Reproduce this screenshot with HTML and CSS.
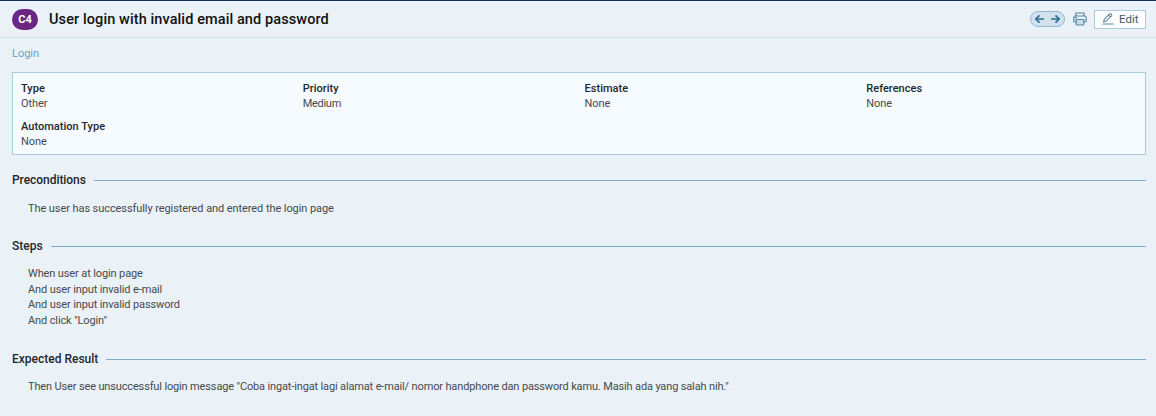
FILE: index.html
```
<!DOCTYPE html>
<html lang="en">
<head>
<meta charset="utf-8">
<title>User login with invalid email and password</title>
<link rel="stylesheet" href="styles.css">
</head>
<body>
<header class="header">
  <span class="badge">C4</span>
  <h1 class="title">User login with invalid email and password</h1>
  <div class="toolbar">
    <div class="pager">
      <svg width="33" height="14" viewBox="0 0 33 14" fill="none" stroke="#356d91" stroke-width="1.7"><path d="M13 7H5.5M8.500 3.300 4.800 7 8.500 10.700M20 7h7.500M24.500 3.300 28.200 7 24.500 10.700"/></svg>
    </div>
    <svg class="printer" width="14" height="14" viewBox="0 0 14 14" fill="none" stroke="#5b88a5" stroke-width="1.2"><path d="M3 4V1h8v3M3 10H1.800Q.8 10 .8 9V5.500Q.8 4 2.300 4h9.400q1.500 0 1.500 1.500V9q0 1-1 1H11"/><path d="M3.200 7.500h7.600v4.200q0 1.300-1.300 1.300h-5q-1.300 0-1.300-1.300z" fill="#c9dce9"/><path d="M2 5.700h2" stroke="#3a9c86"/></svg>
    <a class="edit"><svg width="12" height="12" viewBox="0 0 12 12" fill="none" stroke="#5b88a5" stroke-width="1.1"><path d="m1.700 8.700.6-2.500 5.300-5.300q.6-.5 1.200 0l.7.7q.5.600 0 1.200L4.200 8.100zM6.500 2l1.900 1.900M.3 11h11.400"/></svg><span class="edit-label">Edit</span></a>
  </div>
</header>
<main class="content">
  <a class="crumb">Login</a>
  <dl class="fields">
    <div><dt>Type</dt><dd>Other</dd></div>
    <div><dt>Priority</dt><dd class="medium">Medium</dd></div>
    <div><dt>Estimate</dt><dd>None</dd></div>
    <div><dt>References</dt><dd>None</dd></div>
    <div><dt>Automation Type</dt><dd>None</dd></div>
  </dl>
  <section class="section preconditions">
    <h2>Preconditions</h2>
    <p>The user has successfully registered and entered the login page</p>
  </section>
  <section class="section steps">
    <h2>Steps</h2>
    <p>When user at login page<br>And user input invalid e-mail<br>And user input invalid password<br>And click "Login"</p>
  </section>
  <section class="section expected">
    <h2>Expected Result</h2>
    <p>Then User see unsuccessful login message "Coba ingat-ingat lagi alamat e-mail/ nomor handphone dan password kamu. Masih ada yang salah nih."</p>
  </section>
</main>
</body>
</html>
```
FILE: styles.css
```
* { box-sizing: border-box; }
body {
  margin: 0;
  height: 416px;
  background: #eaf1f7;
  border-top: 1px solid #0b3558;
  font: 11px/15.6px Roboto, "Liberation Sans", sans-serif;
  color: #474a4d;
}
.header {
  display: flex;
  align-items: center;
  height: 37px;
  padding: 0 10px 0 12px;
  border-bottom: 1px solid #cfe1ec;
}
.badge {
  width: 26px;
  height: 21px;
  border-radius: 10.5px;
  background: #6a2680;
  color: #fff;
  font-size: 11px;
  font-weight: 700;
  line-height: 22px;
  text-align: center;
}
.title {
  margin: 0 0 0 11px;
  padding-top: 2px;
  font-size: 14.5px;
  font-weight: 500;
  line-height: 20px;
  letter-spacing: 0.1px;
  color: #111;
  white-space: nowrap;
}
.toolbar { display: flex; align-items: center; margin-left: auto; }
.pager {
  display: flex;
  width: 35px;
  height: 16px;
  margin-top: -1px;
  border: 1px solid #91b9d3;
  border-radius: 8px;
  background: #d1e1ed;
}
.printer { margin: -1px 0 0 8px; }
.edit {
  display: flex;
  align-items: center;
  gap: 5px;
  width: 52px;
  height: 19px;
  margin-left: 7px;
  padding-left: 7px;
  border: 1px solid #a9cbdf;
  background: #fff;
  color: #40576a;
  font-size: 11.5px;
}
.edit-label { padding-top: 1px; }
.content { padding: 0 10px 0 12px; }
.crumb {
  display: block;
  padding-top: 8px;
  line-height: 15px;
  color: #6f9fc4;
}
.fields {
  display: grid;
  grid-template-columns: repeat(4, 281.75px);
  grid-auto-rows: 38px;
  height: 83px;
  margin: 11px 0 0;
  padding: 8px 0 0 8px;
  border: 1px solid #a9cbdf;
  background: #f6fbff;
}
.fields dt { line-height: 15px; font-weight: 500; letter-spacing: 0.03px; color: #24282c; }
.fields dd { margin: 0; line-height: 15px; letter-spacing: -0.1px; }
.fields .medium { letter-spacing: -0.3px; }
.section { margin-top: 16px; }
.section h2 {
  display: flex;
  align-items: center;
  gap: 8px;
  height: 18px;
  margin: 0;
  font-size: 12px;
  font-weight: 500;
  line-height: 18px;
  color: #24282c;
}
.section h2::after { content: ""; flex: 1; height: 1px; background: #7cadcb; }
.section p { margin: 12px 0 0; padding-left: 16px; white-space: nowrap; }
.preconditions { height: 50px; }
.preconditions h2 { letter-spacing: -0.05px; }
.preconditions p { letter-spacing: -0.08px; }
.steps { height: 97px; }
.steps p { margin-top: 11px; letter-spacing: -0.12px; }
.expected p { margin-top: 11px; letter-spacing: -0.145px; }
```
